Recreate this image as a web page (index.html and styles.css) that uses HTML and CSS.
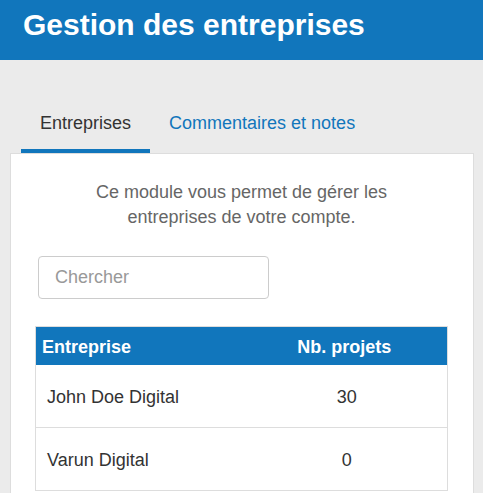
FILE: index.html
```html
<!DOCTYPE html>
<html lang="fr">
<head>
<meta charset="utf-8">
<title>Gestion des entreprises</title>
<link rel="stylesheet" href="styles.css">
</head>
<body>
<header class="topbar">
  <h1 class="title">Gestion des entreprises</h1>
</header>
<main class="main">
  <nav class="tabs">
    <a class="tab tab-active">Entreprises</a>
    <a class="tab">Commentaires et notes</a>
  </nav>
  <section class="card">
    <p class="intro">Ce module vous permet de gérer les entreprises de votre compte.</p>
    <input class="search" type="text" placeholder="Chercher">
    <table class="grid">
      <thead>
        <tr><th class="col-name">Entreprise</th><th class="col-num">Nb. projets</th></tr>
      </thead>
      <tbody>
        <tr><td class="col-name">John Doe Digital</td><td class="col-num">30</td></tr>
        <tr><td class="col-name">Varun Digital</td><td class="col-num">0</td></tr>
      </tbody>
    </table>
  </section>
</main>
</body>
</html>
```
FILE: styles.css
```css
html, body {
  margin: 0;
  padding: 0;
  background: #ebebeb;
  font-family: "Liberation Sans", Arial, sans-serif;
  color: #333;
}

.topbar {
  background: #1176bc;
  height: 60px;
  box-sizing: border-box;
  padding: 8px 23px 0;
}

.title {
  margin: 0;
  font-size: 30px;
  line-height: 34px;
  font-weight: bold;
  color: #fff;
}

.main {
  padding-top: 41px;
}

.tabs {
  display: flex;
  margin-left: 21px;
}

.tab {
  display: block;
  padding: 12px 19px 16px;
  font-size: 18px;
  line-height: 20px;
  color: #1176bc;
  border-bottom: 4px solid transparent;
  cursor: pointer;
}

.tab-active {
  color: #333;
  border-bottom-color: #1176bc;
}

.card {
  margin: 0 9px 0 10px;
  background: #fff;
  border: 1px solid #dddddd;
  padding: 26px 25px 40px 24px;
}

.intro {
  margin: 0 auto;
  max-width: 330px;
  text-align: center;
  font-size: 18px;
  line-height: 25px;
  color: #666;
}

.search {
  display: block;
  box-sizing: border-box;
  width: 231px;
  height: 43px;
  margin: 26px 0 0 3px;
  padding: 0 16px;
  border: 1px solid #cccccc;
  border-radius: 4px;
  font-family: "Liberation Sans", Arial, sans-serif;
  font-size: 18px;
  color: #333;
  outline: none;
}

.search::placeholder {
  color: #999;
}

.grid {
  margin-top: 27px;
  width: 100%;
  border-collapse: collapse;
  table-layout: fixed;
  border: 1px solid #dddddd;
  font-size: 18px;
  line-height: 20px;
}

.grid th {
  background: #1176bc;
  color: #fff;
  font-weight: bold;
  padding: 10px 6px 8px 6px;
}

.grid th.col-name { text-align: left; }
.grid th.col-num { text-align: center; }

.grid td {
  padding: 22px 6px 20px 11px;
  border-bottom: 1px solid #dddddd;
  color: #333;
}

.grid td.col-name { text-align: left; }
.grid td.col-num { text-align: center; }
```
